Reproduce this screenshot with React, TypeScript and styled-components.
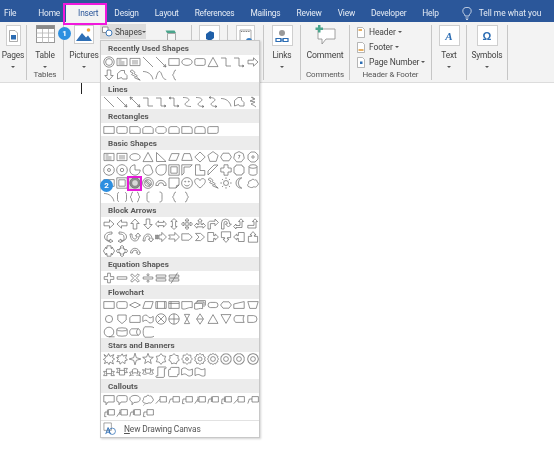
import React from "react";
import styled, { createGlobalStyle } from "styled-components";

const Global = createGlobalStyle`
  html, body { margin: 0; padding: 0; background: #fff; }
  body { width: 554px; height: 452px; overflow: hidden; font-family: Roboto, "Liberation Sans", sans-serif; }
`;

const reg = (n: number, r = 5.2, rot = -90) => {
  const p: string[] = [];
  for (let i = 0; i < n; i++) {
    const a = ((rot + (360 * i) / n) * Math.PI) / 180;
    p.push(`${(6 + r * Math.cos(a)).toFixed(2)} ${(6 + r * Math.sin(a)).toFixed(2)}`);
  }
  return `M${p.join("L")}Z`;
};
const star = (n: number, r1 = 5.6, r2 = 3) => {
  const p: string[] = [];
  for (let i = 0; i < n * 2; i++) {
    const a = ((-90 + (180 * i) / n) * Math.PI) / 180;
    const r = i % 2 ? r2 : r1;
    p.push(`${(6 + r * Math.cos(a)).toFixed(2)} ${(6 + r * Math.sin(a)).toFixed(2)}`);
  }
  return `M${p.join("L")}Z`;
};

const circle = (cx: number, cy: number, r: number) =>
  `M${cx - r} ${cy}a${r} ${r} 0 1 0 ${2 * r} 0a${r} ${r} 0 1 0 ${-2 * r} 0Z`;

const S: Record<string, string> = {
  donut: circle(6, 6, 5.2) + circle(6, 6, 3.4),
  tb: "M1 2.4h10v7.2H1ZM2.5 4h3M2.5 6h6M2.5 8h6",
  vtb: "M1 2.4h10v7.2H1ZM4 4v4.5M6 4v4.5M8 4v4.5",
  line: "M1 1L11 11",
  arrow: "M1 1L11 11M11 11L8 10.2M11 11L10.2 8",
  dbl: "M1 1L11 11M11 11L8 10.2M11 11L10.2 8M1 1L4 1.8M1 1L1.8 4",
  rect: "M.8 2.6h10.4v6.8H.8Z",
  oval: "M.8 6a5.2 3.4 0 1 0 10.4 0a5.2 3.4 0 1 0 -10.4 0Z",
  round: "M2.4 2.6h7.2a1.6 1.6 0 0 1 1.6 1.6v3.6a1.6 1.6 0 0 1-1.6 1.6H2.4a1.6 1.6 0 0 1-1.6-1.6V4.2a1.6 1.6 0 0 1 1.6-1.6Z",
  tri: "M6 1.4L11 10.6H1Z",
  elbow: "M1 2H6V10H11",
  elbowA: "M1 2H6V10H11M11 10L9 9M11 10L9 11",
  elbowD: "M1 2H6V10H11M11 10L9 9M11 10L9 11M1 2L3 1M1 2L3 3",
  right: "M1 4.2H6.5V1.8L11 6L6.5 10.2V7.8H1Z",
  left: "M11 4.2H5.5V1.8L1 6L5.5 10.2V7.8H11Z",
  up: "M4.2 11V5.5H1.8L6 1L10.2 5.5H7.8V11Z",
  down: "M4.2 1V6.5H1.8L6 11L10.2 6.5H7.8V1Z",
  free: "M1.5 10V4.5L5 1.5H8.5V4L11 6.5V10H6.5L5.5 8.5Z",
  scrib: "M5 1L8 3L3 5L8 6L4 8L7 9.5L9 11M4 1L7 3",
  arc: "M1 2.5C6 2.5 10 5.5 11 10.5",
  curve: "M.8 10C3 1 5 1 6.5 5S9 10.5 11.2 10.5",
  brace: "M8 1C5.5 1 6.5 5 4.5 6C6.5 7 5.5 11 8 11",
  curved: "M2 1.5C9 1.5 9 4.5 6 6S3 10.5 10 10.5",
  curvedA: "M2 1.5C9 1.5 9 4.5 6 6S3 10.5 10 10.5M10 10.5L8 9.5M10 10.5L8 11.5",
  curvedD: "M2 1.5C9 1.5 9 4.5 6 6S3 10.5 10 10.5M10 10.5L8 9.5M10 10.5L8 11.5M2 1.5L4 .5M2 1.5L4 2.5",
  snip1: "M.8 2.6H9.2L11.2 4.6V9.4H.8Z",
  snip2: "M2.8 2.6H9.2L11.2 4.6V9.4H.8V4.6Z",
  snip3: "M2.8 2.6H9.2L11.2 4.6V7.4L9.2 9.4H2.8L.8 7.4V4.6Z",
  snipR: "M3 2.6H9.2L11.2 4.6V9.4H.8V4.8A2.2 2.2 0 0 1 3 2.6Z",
  round1: "M.8 2.6H8.6A2.6 2.6 0 0 1 11.2 5.2V9.4H.8Z",
  round2: "M3.4 2.6H8.6A2.6 2.6 0 0 1 11.2 5.2V9.4H.8V5.2A2.6 2.6 0 0 1 3.4 2.6Z",
  round3: "M2.4 2.6H11.2V7.6A1.8 1.8 0 0 1 9.4 9.4H.8V4.2A1.6 1.6 0 0 1 2.4 2.6Z",
  rtri: "M1.5 1.5L11 10.5H1.5Z",
  para: "M3.6 2.6H11.2L8.4 9.4H.8Z",
  trap: "M3 2.6H9L11.2 9.4H.8Z",
  dia: "M6 1L11.2 6L6 11L.8 6Z",
  pent: reg(5, 5.4),
  hex: "M3 2.2H9L11.4 6L9 9.8H3L.6 6Z",
  hept: reg(7, 5.4) + "M5.2 4.4h1.8L5.6 7.6",
  oct: reg(8, 5.4, -67.5) + circle(6, 6, 1.2),
  dec: reg(10, 5.4) + circle(6, 6, 1.5),
  dod: reg(12, 5.4) + circle(6, 6, 1.7),
  pie: "M6 .8A5.2 5.2 0 1 0 11.2 6H6Z",
  chord: "M8.5 1.5A5.2 5.2 0 1 0 11 8Z",
  tear: "M11.2 .8V6A5.2 5.2 0 1 1 6 .8Z",
  frame: "M.8 .8h10.4v10.4H.8ZM2.8 2.8v6.4h6.4V2.8Z",
  half: "M.8 .8H11.2L9 3H3V9L.8 11.2Z",
  lsh: "M1.5 .8H6V6.5H10.8V11.2H1.5Z",
  diag: "M7 1H11L1 11V7Z",
  cross: "M4 .8H8V4H11.2V8H8V11.2H4V8H.8V4H4Z",
  plaque: "M3 1H9A2 2 0 0 0 11 3V9A2 2 0 0 0 9 11H3A2 2 0 0 0 1 9V3A2 2 0 0 0 3 1Z",
  can: "M2 2.5V9.5A4 1.8 0 0 0 10 9.5V2.5A4 1.8 0 0 0 2 2.5A4 1.8 0 0 0 10 2.5",
  bevel: "M.8 .8h10.4v10.4H.8ZM2.8 2.8h6.4v6.4H2.8Z",
  no: circle(6, 6, 5.4) + circle(6, 6, 3.4) + "M3.5 3.5L8.5 8.5M2.4 4L8 9.6M4 2.4L9.6 8",
  barc: "M.8 8.5A5.2 5.2 0 0 1 11.2 8.5H8.8A2.8 2.8 0 0 0 3.2 8.5Z",
  fold: "M1 1H11V8L8 11H1ZM8 11L8.6 8.6L11 8",
  smile: circle(6, 6, 5.4) + circle(4.2, 4.6, .5) + circle(7.8, 4.6, .5) + "M3.4 7.6C5 9.4 7 9.4 8.6 7.6",
  heart: "M6 11C1 7 .4 5 .8 3.4C1.5 1 4.8 1 6 3.5C7.2 1 10.5 1 11.2 3.4C11.6 5 11 7 6 11Z",
  bolt: "M3 .8L6 3.4L5 4.6L8.4 6.8L7.4 7.8L11.2 11.2L5.6 8.8L6.6 7.6L2.6 5.6L4 4.2L1 2.4Z",
  sun: circle(6, 6, 2.5) + "M6 .3V2M6 10V11.7M.3 6H2M10 6H11.7M2 2L3.2 3.2M8.8 8.8L10 10M2 10L3.2 8.8M8.8 3.2L10 2",
  moon: "M8.8 .8A5.6 5.6 0 0 0 8.8 11.2C5 11.2 3 8.8 3 6S5 .8 8.8 .8Z",
  cloud: "M2.6 10C.4 10 .1 7.2 1.6 6.6C.8 4.4 3 3 4 3.8C4.6 1.8 7 1.8 7.6 3.2C8.8 2.2 10.4 3.4 10 4.8C11.8 5.4 11.8 8 10.2 8.6C9.6 10.2 7.8 10.4 7 9.6C5.8 10.8 3.6 10.8 2.6 10Z",
  bracketP: "M3 1.5C1.8 1.5 1.5 2.5 1.5 3.5V8.5C1.5 9.5 1.8 10.5 3 10.5M9 1.5C10.2 1.5 10.5 2.5 10.5 3.5V8.5C10.5 9.5 10.2 10.5 9 10.5",
  braceP: "M4 1C2 1 3 5 1.2 6C3 7 2 11 4 11M8 1C10 1 9 5 10.8 6C9 7 10 11 8 11",
  lbr: "M7.5 1C5 1 5 2.5 5 3.5V8.5C5 9.5 5 11 7.5 11",
  rbr: "M4.5 1C7 1 7 2.5 7 3.5V8.5C7 9.5 7 11 4.5 11",
  rbrace: "M4 1C6.5 1 5.5 5 7.5 6C5.5 7 6.5 11 4 11",
  lr: "M.6 6L3.5 2.8V4.4H8.5V2.8L11.4 6L8.5 9.2V7.6H3.5V9.2Z",
  ud: "M6 .6L9.2 3.5H7.6V8.5H9.2L6 11.4L2.8 8.5H4.4V3.5H2.8Z",
  quad: "M6 .5L8 2.4H6.8V5.2H9.6V4L11.5 6L9.6 8V6.8H6.8V9.6H8L6 11.5L4 9.6H5.2V6.8H2.4V8L.5 6L2.4 4V5.2H5.2V2.4H4Z",
  lru: "M6 .6L8.2 3H7V6.4H9V5L11.6 7.6L9 10.2V8.8H3V10.2L.4 7.6L3 5V6.4H5V3H3.8Z",
  bent: "M1 11V5.5C1 4 2 3.2 3.5 3.2H8V1L11.4 4.4L8 7.8V5.6H3.4V11Z",
  uturn: "M1.5 11V5A4 4 0 0 1 9.5 5V6H11.4L8.4 9L5.4 6H7.2V5A1.6 1.6 0 0 0 4 5V11Z",
  leftup: "M.6 8.5L3 6V7.5H7V3.5H5.5L8 .8L10.6 3.5H9V9.5H3V11Z",
  bentup: "M.8 7.4H7V3.6H5.4L8 .8L10.6 3.6H9V10H.8Z",
  cr: "M9 1C4 1 1.5 3 1.5 6S4 9.4 7 9.6V8L10 10.2L7 11.6V10.6C4 10.6 4 10 4 6.4C4 3.4 6 3 9 3Z",
  cl: "M3 1C8 1 10.5 3 10.5 6S8 9.4 5 9.6V8L2 10.2L5 11.6V10.6C8 10.6 8 10 8 6.4C8 3.4 6 3 3 3Z",
  cu: "M1 3C1.5 8 3.5 10 6 10S10 8 10 5H11.6L9 2L6.4 5H8C8 7 7 8 6 8C4.5 8 3 7 3 3Z",
  cd: "M1 10C1.5 5 3.5 3 6 3S10 5 10 8H11.6L9 11L6.4 8H8C8 6 7 5 6 5C4.5 5 3 6 3 10Z",
  stripe: "M.6 4H1.4V8H.6ZM2.4 4H3.2V8H2.4ZM4 4H6.8V1.4L11.4 6L6.8 10.6V8H4Z",
  notch: "M.6 4H6.8V1.4L11.4 6L6.8 10.6V8H.6L2.4 6Z",
  pentA: "M.8 2.8H8L11.2 6L8 9.2H.8Z",
  chev: "M1.5 2.4H6.5L10.5 6L6.5 9.6H1.5L5 6Z",
  rcall: "M.8 1.5H6.6V4.6H8.2V3L11.4 6L8.2 9V7.4H6.6V10.5H.8Z",
  dcall: "M1.4 .8H10.6V6.6H7.4V8H9L6 11.4L3 8H4.6V6.6H1.4Z",
  lcall: "M11.2 1.5H5.4V4.6H3.8V3L.6 6L3.8 9V7.4H5.4V10.5H11.2Z",
  ucall: "M1.4 11.2H10.6V5.4H7.4V4H9L6 .6L3 4H4.6V5.4H1.4Z",
  lrcall: "M4 .8H8V3.4H9V2L11.6 6L9 10V8.6H8V11.2H4V8.6H3V10L.4 6L3 2V3.4H4Z",
  qcall: "M6 .3L8 2.2H7V3.6H8.4V5H9.8V4L11.7 6L9.8 8V7H8.4V8.4H7V9.8H8L6 11.7L4 9.8H5V8.4H3.6V7H2.2V8L.3 6L2.2 4V5H3.6V3.6H5V2.2H4Z",
  circA: "M1.5 8A4.5 4.5 0 0 1 10.5 7.6H11.6L9.6 10L7.4 7.6H8.6A2.6 2.6 0 0 0 3.4 8Z",
  plus: "M4.6 1.2H7.4V4.6H10.8V7.4H7.4V10.8H4.6V7.4H1.2V4.6H4.6Z",
  minus: "M1.2 4.8H10.8V7.2H1.2Z",
  times: "M3 1.8L6 4.6L9 1.8L10.4 3.2L7.4 6L10.4 8.8L9 10.2L6 7.4L3 10.2L1.6 8.8L4.6 6L1.6 3.2Z",
  div: "M1.2 5H10.8V7H1.2Z" + circle(6, 2.8, 1) + circle(6, 9.2, 1),
  eq: "M1.2 3H10.8V5.2H1.2ZM1.2 6.8H10.8V9H1.2Z",
  neq: "M1.2 3H10.8V5.2H1.2ZM1.2 6.8H10.8V9H1.2ZM3 11.4L9.6 .6",
  proc: "M.8 2.6h10.4v6.8H.8Z",
  alt: "M2.6 2.6h6.8a1.8 1.8 0 0 1 1.8 1.8v3.2a1.8 1.8 0 0 1-1.8 1.8H2.6a1.8 1.8 0 0 1-1.8-1.8V4.4a1.8 1.8 0 0 1 1.8-1.8Z",
  dec2: "M6 3.2L11.4 6L6 8.8L.6 6Z",
  data: "M3 2.6H11.2L9 9.4H.8Z",
  pre: "M.8 2.6h10.4v6.8H.8ZM2.4 2.6v6.8M9.6 2.6v6.8",
  int: "M.8 2.6h10.4v6.8H.8ZM3 2.6v6.8M.8 4.4h10.4",
  doc: "M.8 2.6h10.4V8.8C8 7.4 4 11.4 .8 9.6Z",
  mdoc: "M.6 4.4H8.6V9.6C6 8.6 3 11 .6 10ZM2 4.4V3H10V8M3.4 3V1.6H11.4V6.6",
  term: "M3.6 3.4H8.4a2.6 2.6 0 0 1 0 5.2H3.6a2.6 2.6 0 0 1 0-5.2Z",
  prep: "M3 2.8H9L11.4 6L9 9.2H3L.6 6Z",
  manI: "M.8 5L11.2 2.6V9.4H.8Z",
  manO: "M.8 2.6H11.2L9.2 9.4H2.8Z",
  conn: circle(6, 6, 3.6),
  off: "M1.8 2H10.2V7L6 10.6L1.8 7Z",
  card: "M3 2.6H11.2V9.4H.8V4.8Z",
  tape: "M.8 3.4C3 1.6 5 1.6 6 3.4S9 5.2 11.2 3.4V8.6C9 10.4 7 10.4 6 8.6S3 6.8 .8 8.6Z",
  sum: circle(6, 6, 5.2) + "M2.4 2.4L9.6 9.6M9.6 2.4L2.4 9.6",
  or: circle(6, 6, 5.2) + "M6 .8V11.2M.8 6H11.2",
  coll: "M3.4 1.4H8.6L3.4 10.6H8.6Z",
  sort: "M6 .8L9.4 6L6 11.2L2.6 6ZM2.6 6H9.4",
  ext: "M6 1.6L11 10.4H1Z",
  merge: "M1 1.6H11L6 10.4Z",
  stor: "M2.8 2.6H11.2C9.8 4 9.8 8 11.2 9.4H2.8C.4 8 .4 4 2.8 2.6Z",
  delay: "M.8 2.6H6.6A3.4 3.4 0 0 1 6.6 9.4H.8Z",
  seq: circle(6, 6, 4.8) + "M6 10.8H11.6",
  disk: "M.8 3.4V8.6A5.2 1.6 0 0 0 11.2 8.6V3.4A5.2 1.6 0 0 0 .8 3.4A5.2 1.6 0 0 0 11.2 3.4",
  dir: "M2.6 2.8H9.4C12 4 12 8 9.4 9.2H2.6C0 8 0 4 2.6 2.8ZM9.4 2.8C7 4 7 8 9.4 9.2",
  disp: "M2.8 .8H9A5.2 5.2 0 0 1 9 11.2H2.8C.6 9 .6 3 2.8 .8Z",
  exp1: "M1 1.5L4 3.6L5.6 .6L7 3.4L10.8 1.6L9.4 4.6L11.6 6L9.4 7.6L10.4 11L7 9L6 11.6L4.4 9.2L1.4 10.6L2.6 7.8L.4 6.4L2.8 4.8Z",
  exp2: "M1.6 2.6L4.6 3L6.2 .8L7.4 3.2L10.6 1.8L9.6 5L11.4 7L9 7.6L9 10.6L6.4 9L4 11.2L3.6 8.6L.8 8.6L2.4 6.2L.6 4.6L2.6 4.4Z",
  s4: star(4, 5.8, 1.9),
  s5: star(5, 5.6, 2.4),
  s6: star(6, 5.4, 3.6),
  s7: star(7, 5.4, 4),
  s8b: star(8, 5.4, 4.2) + circle(6, 6, 1.4),
  s10: star(10, 5.6, 4.5) + circle(6, 6, 2),
  s12: star(12, 5.6, 4.7) + circle(6, 6, 2.4),
  s16: star(16, 5.6, 4.8) + circle(6, 6, 2.4),
  s24: star(24, 5.6, 4.9) + circle(6, 6, 2.4),
  s32: star(32, 5.6, 5) + circle(6, 6, 2.4),
  ribU: "M3.4 3H8.6V7.6H3.4ZM3.4 5.4H.6L1.8 7.4L.6 9.6H4L3.4 7.6M8.6 5.4H11.4L10.2 7.4L11.4 9.6H8L8.6 7.6",
  ribD: "M3.4 4.4H8.6V9H3.4ZM3.4 6.6H.6L1.8 4.6L.6 2.4H4L3.4 4.4M8.6 6.6H11.4L10.2 4.6L11.4 2.4H8L8.6 4.4",
  ribC: "M3.4 3.6C5 2.4 7 2.4 8.6 3.6V7.6C7 6.4 5 6.4 3.4 7.6ZM3.4 5.6L.6 6.4L1.8 8.2L.6 10C2 9 3 9 4.6 9.4M8.6 5.6L11.4 6.4L10.2 8.2L11.4 10C10 9 9 9 7.4 9.4",
  ribC2: "M3.4 2.4C5 3.6 7 3.6 8.6 2.4V6.4C7 7.6 5 7.6 3.4 6.4ZM3.4 4.4L.6 3.6L1.8 5.8L.6 7.6C2 8.6 3 8.4 4.6 8M8.6 4.4L11.4 3.6L10.2 5.8L11.4 7.6C10 8.6 9 8.4 7.4 8",
  scrV: "M2.8 1H10.6C11.4 1 11.4 2.6 10.6 2.6H9.4V10C9.4 11.4 8.4 11.4 8 11.4H1.6C.6 11.4 .6 9.8 1.6 9.8H2.8V1Z",
  scrH: "M1 3.4H2.4V2.4C2.4 1.6 3 1.4 3.4 1.4H11V8.4H9.6V9.6C9.6 10.4 9 10.6 8.6 10.6H1.4C.8 10.6 .6 10 .6 9.4V3.8Z",
  wave: "M.6 3C3 1.4 4.6 1.6 6 3S9 4.4 11.4 3V9C9 10.4 7.4 10.4 6 9S3 7.6 .6 9Z",
  wave2: "M1 2.6C3 1.4 4.6 2 6 3S9.4 3.6 11 2.6V9.6C9 10.6 7.4 10 6 9S2.6 8.6 1 9.6Z",
  cr1: "M.8 1.6H11.2V8H5L3 10.8V8H.8Z",
  cr2: "M2.6 1.6H9.4A1.8 1.8 0 0 1 11.2 3.4V6.2A1.8 1.8 0 0 1 9.4 8H5L3 10.8V8H2.6A1.8 1.8 0 0 1 .8 6.2V3.4A1.8 1.8 0 0 1 2.6 1.6Z",
  cr3: "M6 1.4C9 1.4 11.2 2.8 11.2 5S9 8.4 6 8.4H5L3 10.8L3.2 8C1.6 7.4 .8 6.2 .8 5C.8 2.8 3 1.4 6 1.4Z",
  cr4: "M3 9C.4 9 .2 6.2 1.6 5.6C1 3.4 3 2 4 3C4.6 .8 7 .8 7.6 2.2C8.8 1.4 10.4 2.6 10 3.8C11.8 4.4 11.8 7 10.2 7.6C9.6 9.2 7.8 9.4 7 8.6C5.8 9.8 4 9.8 3 9ZM2.4 10.4h.8M1 11.4h.6",
  ln1: "M5 2.6H11.4V8H5ZM5 5L.8 9.6",
  ln2: "M5 2.6H11.4V8H5ZM5 5L2.4 5L.8 9.6",
  ln3: "M5 2.6H11.4V8H5ZM5 5L2 5L1.4 9.6H3.4",
  lna: "M5 2.6H11.4V8H5ZM4 2.6V8M4 5L.8 9.6",
  lnb: "M5.4 2.6H11.4V8H5.4ZM4.4 2.6V8M4.4 5L2 5L.8 9.6",
  lnc: "M5.4 2.6H11.4V8H5.4ZM4.4 2.6V8M4.4 5L2 5L1.6 9.6H3.4",
};

const R = (s: string) => s.split(" ");

const groups: { title: string; rows: string[][] }[] = [
  { title: "Recently Used Shapes", rows: [
    R("donut tb vtb line arrow rect oval round tri elbow elbowA right"),
    R("down free bolt arc curve brace"),
  ]},
  { title: "Lines", rows: [R("line arrow dbl elbow elbowA elbowD curved curvedA curvedD arc free scrib")] },
  { title: "Rectangles", rows: [R("rect round snip1 snip2 snip3 snipR round1 round2 round3")] },
  { title: "Basic Shapes", rows: [
    R("tb vtb oval tri rtri para trap dia pent hex hept oct"),
    R("dec dod pie chord tear frame half lsh diag cross plaque can"),
    R("rect bevel donut no barc fold smile heart bolt sun moon cloud"),
    R("arc bracketP braceP lbr rbr brace rbrace"),
  ]},
  { title: "Block Arrows", rows: [
    R("right left up down lr ud quad lru bent uturn leftup bentup"),
    R("cr cl cu cd stripe notch pentA chev rcall dcall lcall ucall"),
    R("lrcall qcall circA"),
  ]},
  { title: "Equation Shapes", rows: [R("plus minus times div eq neq")] },
  { title: "Flowchart", rows: [
    R("proc alt dec2 data pre int doc mdoc term prep manI manO"),
    R("conn off card tape sum or coll sort ext merge stor delay"),
    R("seq disk dir disp"),
  ]},
  { title: "Stars and Banners", rows: [
    R("exp1 exp2 s4 s5 s6 s7 s8b s10 s12 s16 s24 s32"),
    R("ribU ribD ribC ribC2 scrV scrH wave wave2"),
  ]},
  { title: "Callouts", rows: [
    R("cr1 cr2 cr3 cr4 ln1 ln2 ln3 lna lnb lnc ln1 ln2"),
    R("lnc lna lnb ln3"),
  ]},
];

const Page = styled.div`
  position: relative;
  width: 554px;
  height: 452px;
  overflow: hidden;
  background: #fff;
  filter: blur(0.3px);
`;
const TabBar = styled.div`
  height: 22px;
  background: #2b579a;
  display: flex;
  align-items: flex-end;
  padding-left: 4px;
  color: #e6ecf5;
  font-size: 8.4px;
  letter-spacing: -0.2px;
`;
const Tab = styled.div<{ $active?: boolean }>`
  flex: none;
  height: 18px;
  line-height: 18px;
  white-space: nowrap;
  margin-right: ${(p) => (p.$active ? 8 : 16)}px;
  padding: ${(p) => (p.$active ? "0 8px 0 12px" : "0")};
  margin-left: ${(p) => (p.$active ? -10 : 0)}px;
  background: ${(p) => (p.$active ? "#f3f3f3" : "transparent")};
  color: ${(p) => (p.$active ? "#2b579a" : "#e6ecf5")};
  &:first-child { margin-right: 22px; }
`;
const Tell = styled.div`
  display: flex;
  align-items: center;
  gap: 7px;
  height: 18px;
  margin-left: 7px;
  white-space: nowrap;
`;
const TellText = styled.span`
  letter-spacing: 0;
  font-size: 8.4px;
`;
const Ribbon = styled.div`
  height: 57px;
  background: #f3f3f3;
  border-bottom: 1px solid #dcdcdc;
  display: flex;
  padding-top: 3px;
`;
const Group = styled.div<{ $w: number }>`
  flex: none;
  width: ${(p) => p.$w}px;
  height: 55px;
  border-right: 1px solid #c6c6c6;
  display: flex;
  flex-direction: column;
  align-items: center;
  color: #444;
  box-sizing: border-box;
`;
const IllusGroup = styled(Group)`
  flex-direction: row;
  align-items: flex-start;
  padding-left: 5px;
`;
const Tool = styled.div<{ $w: number }>`
  width: ${(p) => p.$w}px;
  flex: none;
  display: flex;
  flex-direction: column;
  align-items: center;
`;
const Slot = styled.div`
  height: 22px;
  display: flex;
  align-items: flex-start;
  justify-content: center;
`;
const Label = styled.div<{ $size?: number }>`
  line-height: 12px;
  margin-top: 2px;
  white-space: nowrap;
  font-size: ${(p) => p.$size ?? 8.4}px;
  letter-spacing: -0.15px;
`;
const GroupName = styled.div`
  margin-top: auto;
  line-height: 11px;
  font-size: 8px;
  letter-spacing: -0.12px;
  color: #555;
  white-space: nowrap;
`;
const Caret = styled.div`
  width: 0;
  height: 0;
  border: 2px solid transparent;
  border-top: 2.4px solid #555;
  border-bottom: 0;
  margin-top: 5px;
`;
const IconBox = styled.div<{ $w?: number }>`
  width: ${(p) => p.$w ?? 21}px;
  height: 21px;
  background: #fff;
  border: 1px solid #cfcfcf;
  box-sizing: border-box;
  display: flex;
  align-items: center;
  justify-content: center;
`;
const Stack = styled.div`
  display: flex;
  flex-direction: column;
  gap: 3px;
  align-self: flex-start;
  margin: 1px 0 0 7px;
`;
const StackRow = styled.div`
  height: 12px;
  display: flex;
  align-items: center;
  gap: 4px;
  white-space: nowrap;
  color: #444;
  font-size: 8.5px;
  letter-spacing: -0.12px;
`;
const InlineCaret = styled(Caret)`
  margin: 0 0 0 -2px;
`;
const Cursor = styled.div`
  width: 1px;
  height: 11px;
  background: #222;
  margin: 0 0 0 81px;
`;
const Menu = styled.div`
  position: absolute;
  left: 100px;
  top: 40px;
  width: 160px;
  height: 398px;
  box-sizing: border-box;
  background: #fff;
  border: 1px solid #c8c8c8;
  box-shadow: 1px 1px 2px rgba(0,0,0,.18);
  z-index: 3;
`;
const Section = styled.div`
  display: flex;
  flex-direction: column;
`;
const SectionTitle = styled.div`
  height: 14px;
  line-height: 14px;
  background: #ececec;
  padding-left: 7px;
  font-size: 8.1px;
  font-weight: 700;
  color: #595959;
`;
const ShapeGrid = styled.div`
  padding: 0 0 0 1px;
  display: flex;
  flex-direction: column;
`;
const ShapeRow = styled.div`
  display: flex;
  height: 13.3px;
  align-items: center;
`;
const ShapeCell = styled.div<{ $on?: boolean }>`
  width: 13.1px;
  height: 13px;
  flex: none;
  box-sizing: border-box;
  display: flex;
  align-items: center;
  justify-content: center;
  ${(p) => (p.$on ? "outline: 2px solid #e619d8; outline-offset: -1px; background:#d8d8d8; & path { fill: #8f8f8f; fill-rule: evenodd; }" : "")}
`;
const Glyph = styled.svg`
  display: block;
  fill: none;
  stroke: #6a6a6a;
  stroke-width: 0.72;
`;
const Foot = styled.div`
  border-top: 1px solid #e2e2e2;
  height: 16px;
  display: flex;
  align-items: center;
  gap: 8px;
  padding-left: 2px;
  font-size: 8.4px;
  letter-spacing: -0.12px;
  color: #555;
`;
const Under = styled.span`
  text-decoration: underline;
  text-decoration-thickness: 0.6px;
`;
const ShapesBtn = styled.div`
  width: 46px;
  height: 15px;
  margin: -1px 0 0 1px;
  flex: none;
  background: #dcdcdc;
  display: flex;
  align-items: center;
  gap: 2px;
  padding-left: 2px;
  box-sizing: border-box;
  font-size: 8.4px;
  letter-spacing: -0.1px;
  color: #444;
`;
const SmallIcon = styled.div`
  margin: 2px 0 0 19px;
`;
const Badge = styled.div<{ $x: number; $y: number }>`
  position: absolute;
  left: ${(p) => p.$x}px;
  top: ${(p) => p.$y}px;
  width: 13px;
  height: 13px;
  border-radius: 50%;
  background: #2d8fe0;
  color: #fff;
  font-size: 8px;
  font-weight: 700;
  line-height: 13px;
  text-align: center;
  z-index: 5;
`;
const Highlight = styled.div`
  position: absolute;
  left: 63px;
  top: 3px;
  width: 44px;
  height: 22px;
  border: 2px solid #f018dc;
  box-sizing: border-box;
  z-index: 5;
`;
const TextGlyph = styled.span`
  color: #2b6cb3;
  font-style: italic;
  font-weight: 700;
  font-size: 11px;
  font-family: "Liberation Serif", serif;
`;
const SymGlyph = styled.span`
  color: #2b6cb3;
  font-weight: 700;
  font-size: 11px;
  font-family: "Liberation Sans", sans-serif;
`;

const Pic = ({ d }: { d: string }) => (
  <Glyph viewBox="0 0 12 12" width={12} height={12}>
    <path d={d} />
  </Glyph>
);

const tabs = ["File", "Home", "Insert", "Design", "Layout", "References", "Mailings", "Review", "View", "Developer", "Help"];

const Ic = {
  Pages: () => (
    <IconBox $w={15}><svg width="9" height="12" viewBox="0 0 9 12"><path d="M.5.5h5.5l2.5 2.5v8.5H.5Z" fill="#fff" stroke="#8a8a8a" strokeWidth=".7"/><path d="M2 5h5v4.5H2Z" fill="#2b6cb3"/></svg></IconBox>
  ),
  Table: () => (
    <svg width="19" height="18" viewBox="0 0 19 18"><rect x=".5" y=".5" width="18" height="17" fill="#fff" stroke="#999"/><rect x=".5" y=".5" width="18" height="3.5" fill="#8a8a8a"/><path d="M.5 8h18M.5 12.5h18M6.5 4v14M12.5 4v14" stroke="#b5b5b5" strokeWidth=".8"/></svg>
  ),
  Pictures: () => (
    <svg width="20" height="19" viewBox="0 0 20 19"><rect x=".5" y=".5" width="19" height="18" fill="#fff" stroke="#ccc"/><circle cx="14.5" cy="5" r="1.8" fill="#f0a640"/><path d="M2 16L8 8L12 12.5L14 10.5L18 16Z" fill="#2f6fb5"/></svg>
  ),
  Shapes: () => (
    <svg width="11" height="11" viewBox="0 0 11 11" fill="none"><path d="M.5 1h5.5v5.5H.5Z" stroke="#7a7a7a" strokeWidth=".8" fill="#fff"/><circle cx="7" cy="7" r="3" stroke="#2b6cb3" strokeWidth=".9" fill="#fff"/></svg>
  ),
  Store: () => (
    <svg width="12" height="12" viewBox="0 0 12 12"><path d="M.5 .5H9.5L11 3H2Z" fill="#4aa58c"/><path d="M2.5 3.5H10.5V11.5H2.5Z" fill="#f6f6f6" stroke="#888" strokeWidth=".7"/></svg>
  ),
  Box: () => (
    <IconBox><svg width="12" height="12" viewBox="0 0 12 12"><path d="M6 1L10 2.5V8L6 11L2 9V4Z" fill="#1f5fa8"/></svg></IconBox>
  ),
  Cal: () => (
    <IconBox $w={19}><svg width="14" height="14" viewBox="0 0 14 14"><path d="M1 1h11v11H1Z" fill="#fff" stroke="#888" strokeWidth=".7"/><path d="M2 2.5h9" stroke="#777" strokeDasharray="1 .7"/><circle cx="10" cy="12" r="3" fill="#3a7fc4"/></svg></IconBox>
  ),
  Links: () => (
    <IconBox><svg width="14" height="14" viewBox="0 0 14 14"><circle cx="7" cy="4" r="3" fill="#999"/><path d="M1 9.5h5v3H1ZM8 9.5h5v3H8Z" fill="none" stroke="#2b6cb3" strokeWidth="1.2"/><path d="M5 11h4" stroke="#2b6cb3"/></svg></IconBox>
  ),
  Comment: () => (
    <svg width="21" height="20" viewBox="0 0 21 20"><path d="M3 4H20V14H11L7 19V14H3Z" fill="#fff" stroke="#8a8a8a" strokeWidth=".8"/><path d="M3 0h2.5v2.5H8V5H5.5v2.5H3V5H.5V2.5H3Z" fill="#4aa58c"/></svg>
  ),
  Text: () => (
    <IconBox><TextGlyph>A</TextGlyph></IconBox>
  ),
  Sym: () => (
    <IconBox><SymGlyph>Ω</SymGlyph></IconBox>
  ),
  Hdr: ({ k }: { k: number }) => (
    <svg width="8" height="11" viewBox="0 0 8 11"><path d="M.5.5H5.5L7.5 2.5V10.5H.5Z" fill="#fff" stroke="#999" strokeWidth=".7"/>
      {k === 0 && <path d="M1.5 2H5V4H1.5Z" fill="#e8b063"/>}
      {k === 1 && <path d="M1.5 7H6.5V9H1.5Z" fill="#e8b063"/>}
      {k === 2 && <path d="M3 4.5H5.5V7H3Z" fill="#2b6cb3"/>}
    </svg>
  ),
};

export default function App() {
  return (
    <>
      <Global />
      <Page>
        <TabBar>
          {tabs.map((t) => (
            <Tab key={t} $active={t === "Insert"}>{t}</Tab>
          ))}
          <Tell>
            <svg width="10" height="13" viewBox="0 0 10 13" fill="none" stroke="#e6ecf5" strokeWidth=".8"><path d="M3 9C3 7 .8 6.5 .8 4.2a4.2 3.8 0 0 1 8.4 0C9.2 6.5 7 7 7 9ZM3.5 11h3M4 12.5h2"/></svg>
            <TellText>Tell me what you</TellText>
          </Tell>
        </TabBar>
        <Ribbon>
          <Group $w={27}>
            <Slot><Ic.Pages /></Slot>
            <Label>Pages</Label>
            <Caret />
          </Group>
          <Group $w={37}>
            <Slot><Ic.Table /></Slot>
            <Label>Table</Label>
            <Caret />
            <GroupName>Tables</GroupName>
          </Group>
          <IllusGroup $w={128}>
            <Tool $w={30}>
              <Slot><Ic.Pictures /></Slot>
              <Label>Pictures</Label>
              <Caret />
            </Tool>
            <ShapesBtn>
              <Ic.Shapes />
              <span>Shapes</span>
              <InlineCaret />
            </ShapesBtn>
            <SmallIcon><Ic.Store /></SmallIcon>
          </IllusGroup>
          <Group $w={36}>
            <Slot><Ic.Box /></Slot>
          </Group>
          <Group $w={36}>
            <Slot><Ic.Cal /></Slot>
          </Group>
          <Group $w={37}>
            <Slot><Ic.Links /></Slot>
            <Label>Links</Label>
            <Caret />
          </Group>
          <Group $w={49}>
            <Slot><Ic.Comment /></Slot>
            <Label $size={8.7}>Comment</Label>
            <GroupName>Comments</GroupName>
          </Group>
          <Group $w={82}>
            <Stack>
              <StackRow><Ic.Hdr k={0} />Header<InlineCaret /></StackRow>
              <StackRow><Ic.Hdr k={1} />Footer<InlineCaret /></StackRow>
              <StackRow><Ic.Hdr k={2} />Page Number<InlineCaret /></StackRow>
            </Stack>
            <GroupName>Header &amp; Footer</GroupName>
          </Group>
          <Group $w={35}>
            <Slot><Ic.Text /></Slot>
            <Label>Text</Label>
            <Caret />
          </Group>
          <Group $w={41}>
            <Slot><Ic.Sym /></Slot>
            <Label>Symbols</Label>
            <Caret />
          </Group>
        </Ribbon>
        <Cursor />
        <Highlight />
        <Badge $x={58} $y={27}>1</Badge>
        <Badge $x={100} $y={179}>2</Badge>
        <Menu>
          {groups.map((g) => (
            <Section key={g.title}>
              <SectionTitle>{g.title}</SectionTitle>
              <ShapeGrid>
                {g.rows.map((row, i) => (
                  <ShapeRow key={i}>
                    {row.map((k, j) => (
                      <ShapeCell key={j} $on={g.title === "Basic Shapes" && i === 2 && j === 2}>
                        <Pic d={S[k]} />
                      </ShapeCell>
                    ))}
                  </ShapeRow>
                ))}
              </ShapeGrid>
            </Section>
          ))}
          <Foot>
            <svg width="13" height="13" viewBox="0 0 14 14"><path d="M1 1h8v8H1Z" fill="#fff" stroke="#777" strokeWidth=".7"/><circle cx="10" cy="10" r="3.4" fill="none" stroke="#2b6cb3" strokeWidth=".8"/><path d="M3 13L5.5 6L8 13M4 11H7" fill="none" stroke="#2b6cb3" strokeWidth="1"/></svg>
            <span><Under>N</Under>ew Drawing Canvas</span>
          </Foot>
        </Menu>
      </Page>
    </>
  );
}
